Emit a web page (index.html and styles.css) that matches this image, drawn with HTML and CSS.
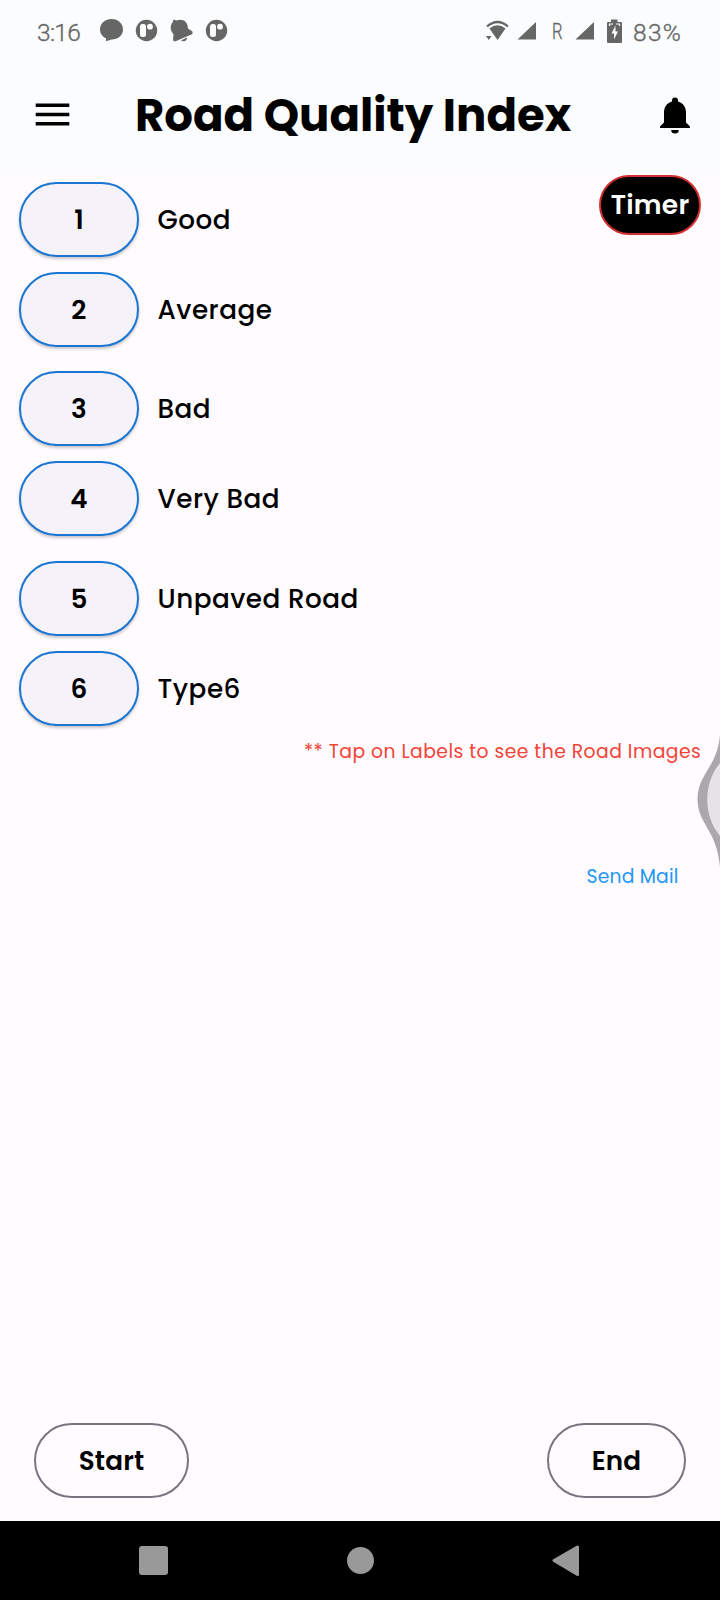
FILE: index.html
```html
<!DOCTYPE html>
<html lang="en">
<head>
<meta charset="utf-8">
<title>Road Quality Index</title>
<link rel="stylesheet" href="styles.css">
</head>
<body>
<div class="screen">
  <div class="status">
    <span class="clock">3:16</span>
    <svg class="status-left" width="130" height="26" viewBox="98 18 130 26">
      <g fill="#666">
        <path d="M111.500 19C118 19 123 23.500 123 29.500S118 39.500 111.500 39.500L106 41.300V38.300C102.500 36.800 100 33.500 100 29.500C100 23.500 105 19 111.500 19Z"/>
        <path d="M173.500 19.500L176.500 20.500C183 18 187.500 21.500 188 28.500L192.500 31.500V34L175 41.500L173 40.500L173.500 34C170 31 170 25 172.500 22.500Z"/>
        <path d="M181 40.500L187 37.500C187.500 40 184.500 42.500 181 40.500Z"/>
        <circle cx="146.500" cy="30.500" r="10.700"/>
        <circle cx="216.500" cy="30.500" r="10.700"/>
      </g>
      <g fill="#fbfcfe">
        <rect x="140" y="24" width="6" height="13" rx="2.500"/><circle cx="150" cy="26.700" r="2.900"/>
        <rect x="210" y="24" width="6" height="13" rx="2.500"/><circle cx="220" cy="26.700" r="2.900"/>
      </g>
    </svg>
    <svg class="wifi" width="54" height="26" viewBox="484 18 54 26">
      <path d="M487 26.500Q497.500 17.500 508 26.500" fill="none" stroke="#666" stroke-width="2.300"/>
      <path d="M489.500 28.500Q497.500 22 505.500 28.500L497.500 40ZM486 36h5.500l-2.700 4ZM517.500 39.500L536 22V39.500Z" fill="#666"/>
    </svg>
    <span class="roam">R</span>
    <svg class="cell" width="50" height="26" viewBox="574 18 50 26">
      <path d="M575.500 39.500L594 22V39.500Z" fill="#666"/>
      <path d="M611 19.500h6.500V22H621q1 0 1 1V42q0 1-1 1H608q-1 0-1-1V23q0-1 1-1h3Z" fill="#666"/>
      <path d="M609 24h4M616 24h4M609.500 24v2M619.500 24v2" stroke="#fbfcfe" stroke-width="1.200"/>
      <path d="M615.500 25.500L611.500 33.500H614V39.500L618 31.500H615.500Z" fill="#fbfcfe"/>
    </svg>
    <span class="battery">83%</span>
  </div>
  <header class="bar">
    <svg class="menu" width="34" height="24" viewBox="0 0 34 24"><path d="M.700 2.300h33.600M.700 11.500h33.600M.700 20.700h33.600" stroke="#000" stroke-width="3.600"/></svg>
    <h1 class="title">Road Quality Index</h1>
    <svg class="bell" width="30" height="37" viewBox="0 0 30 37"><path d="M15 .5A3 3 0 0 1 18 3.500V4.500C23.500 6 26 10.500 26 15.500V25.500L30 29.500V31H0V29.500L4 25.500V15.500C4 10.500 6.500 6 12 4.500V3.500A3 3 0 0 1 15 .5ZM11.200 33h7.600A3.800 3.500 0 0 1 11.200 33Z"/></svg>
  </header>
  <main class="content">
    <div class="ratings">
      <div class="pair">
        <div class="row"><button class="num">1</button><span class="label">Good</span></div>
        <div class="row"><button class="num">2</button><span class="label">Average</span></div>
      </div>
      <div class="pair">
        <div class="row"><button class="num">3</button><span class="label">Bad</span></div>
        <div class="row"><button class="num">4</button><span class="label">Very Bad</span></div>
      </div>
      <div class="pair">
        <div class="row"><button class="num">5</button><span class="label">Unpaved Road</span></div>
        <div class="row"><button class="num">6</button><span class="label">Type6</span></div>
      </div>
    </div>
    <button class="timer">Timer</button>
  </main>
  <p class="hint">** Tap on Labels to see the Road Images</p>
  <a class="mail">Send Mail</a>
  <div class="actions">
    <button class="action start">Start</button>
    <button class="action end">End</button>
  </div>
  <nav class="nav">
    <svg width="720" height="79" viewBox="0 1521 720 79" fill="#999">
      <rect x="139" y="1546" width="29" height="29" rx="3"/>
      <circle cx="360.500" cy="1560.500" r="13.500"/>
      <path d="M554 1560.500L577.500 1547V1574.500Z" stroke="#999" stroke-width="3" stroke-linejoin="round"/>
    </svg>
  </nav>
  <svg class="edge" width="24" height="136" viewBox="696 733 24 136">
    <path d="M720 735C717 768 697.500 774 697.500 799S717 830 720 867Z" fill="#aaa8aa"/>
    <path d="M720 763C703 783 703 816 720 836Z" fill="#e5e3e5"/>
  </svg>
</div>
</body>
</html>
```
FILE: styles.css
```css
* { box-sizing: border-box; }
body { margin: 0; }
button { padding: 0; font: inherit; color: #000; background: none; }
svg { display: block; flex: none; }
.screen {
  position: relative;
  display: flex;
  flex-direction: column;
  width: 720px;
  height: 1600px;
  overflow: hidden;
  background: #fffbff;
  color: #000;
  font-family: Poppins, Inter, sans-serif;
  white-space: nowrap;
}
.status {
  display: flex;
  height: 62px;
  padding-top: 18px;
  background: #fbfcfe;
  color: #666;
  font: 300 24.500px/29px Roboto, sans-serif;
  -webkit-text-stroke: .35px #666;
}
.clock { width: 61px; margin-left: 37px; letter-spacing: -.7px; }
.wifi { margin-left: 256px; }
.roam { width: 22px; margin-left: 14px; font-size: 22px; line-height: 27px; transform: scaleX(.75); transform-origin: left; }
.battery { margin-left: 9px; letter-spacing: 1.300px; }
.bar {
  display: flex;
  align-items: center;
  height: 113px;
  padding: 0 30px 6px 35px;
  background: #fbfcfe;
}
.menu { margin-bottom: 1px; overflow: visible; }
.title { width: 490px; margin: 0 0 0 66px; font-size: 45px; line-height: 60px; font-weight: 700; }
.bell { margin-left: 35px; }
.content { display: flex; justify-content: space-between; align-items: flex-start; padding: 0 19px; }
.ratings { display: flex; flex-direction: column; padding-top: 7px; }
.pair { display: flex; flex-direction: column; gap: 15px; margin-bottom: 24.400px; }
.pair + .pair { margin-bottom: 24.800px; }
.pair:last-child { margin-bottom: 0; }
.row { display: flex; align-items: center; gap: 18.600px; }
.num {
  width: 120px;
  height: 75px;
  border: 2px solid #1976d2;
  border-radius: 38px;
  background: #f6f2fa;
  box-shadow: 0 2px 3px rgba(0,0,0,.22);
  font-size: 26.250px;
  font-weight: 600;
  letter-spacing: .190px;
}
.label { font-size: 26.250px; line-height: 40px; font-weight: 500; letter-spacing: .470px; }
.timer {
  width: 102px;
  height: 60px;
  border: 2px solid #d32f2f;
  border-radius: 30px;
  background: #000;
  color: #fff;
  font-size: 26.500px;
  font-weight: 600;
  letter-spacing: .250px;
}
.pair:last-child + .pair { margin: 0; }
.hint { width: 397px; margin: 10.800px 0 0 304px; font-size: 18.750px; line-height: 30px; letter-spacing: .470px; color: #f44336; }
.mail { width: 94px; margin: 95px 0 0 586.500px; font-size: 18.750px; line-height: 30px; letter-spacing: .190px; color: #2196f3; }
.actions { display: flex; justify-content: space-between; margin-top: auto; padding: 0 34px 23px; }
.action { height: 75px; border: 2px solid #79747e; border-radius: 38px; font-size: 26.250px; font-weight: 600; letter-spacing: .190px; }
.start { width: 155px; }
.end { width: 139px; }
.nav { height: 79px; flex: none; background: #000; }
/* Gesture handle overlapping the right edge */
.edge { position: absolute; top: 733px; right: 0; }
```
